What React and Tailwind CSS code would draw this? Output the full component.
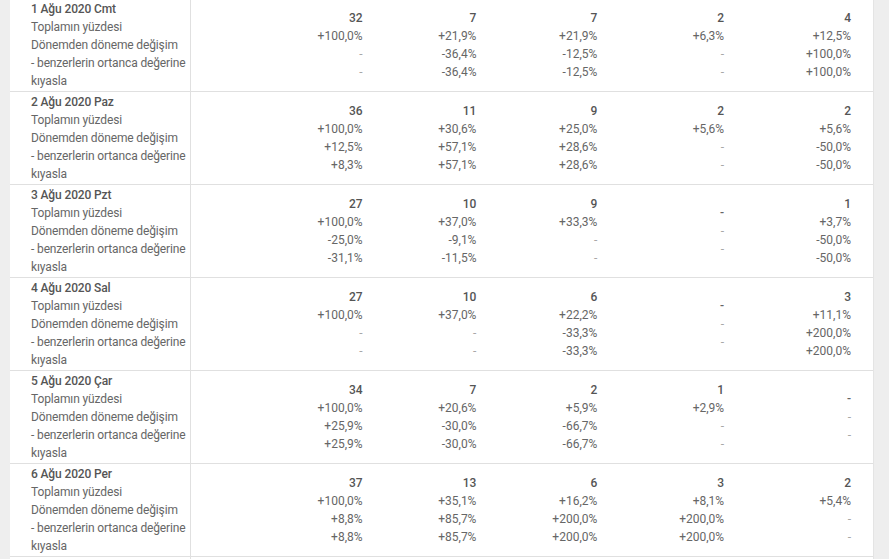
import React from 'react';

const rows = [
  {
    date: '1 Ağu 2020 Cmt',
    cols: [
      ['32', '+100,0%', '-', '-'],
      ['7', '+21,9%', '-36,4%', '-36,4%'],
      ['7', '+21,9%', '-12,5%', '-12,5%'],
      ['2', '+6,3%', '-', '-'],
      ['4', '+12,5%', '+100,0%', '+100,0%'],
    ],
  },
  {
    date: '2 Ağu 2020 Paz',
    cols: [
      ['36', '+100,0%', '+12,5%', '+8,3%'],
      ['11', '+30,6%', '+57,1%', '+57,1%'],
      ['9', '+25,0%', '+28,6%', '+28,6%'],
      ['2', '+5,6%', '-', '-'],
      ['2', '+5,6%', '-50,0%', '-50,0%'],
    ],
  },
  {
    date: '3 Ağu 2020 Pzt',
    cols: [
      ['27', '+100,0%', '-25,0%', '-31,1%'],
      ['10', '+37,0%', '-9,1%', '-11,5%'],
      ['9', '+33,3%', '-', '-'],
      null,
      ['1', '+3,7%', '-50,0%', '-50,0%'],
    ],
  },
  {
    date: '4 Ağu 2020 Sal',
    cols: [
      ['27', '+100,0%', '-', '-'],
      ['10', '+37,0%', '-', '-'],
      ['6', '+22,2%', '-33,3%', '-33,3%'],
      null,
      ['3', '+11,1%', '+200,0%', '+200,0%'],
    ],
  },
  {
    date: '5 Ağu 2020 Çar',
    cols: [
      ['34', '+100,0%', '+25,9%', '+25,9%'],
      ['7', '+20,6%', '-30,0%', '-30,0%'],
      ['2', '+5,9%', '-66,7%', '-66,7%'],
      ['1', '+2,9%', '-', '-'],
      null,
    ],
  },
  {
    date: '6 Ağu 2020 Per',
    cols: [
      ['37', '+100,0%', '+8,8%', '+8,8%'],
      ['13', '+35,1%', '+85,7%', '+85,7%'],
      ['6', '+16,2%', '+200,0%', '+200,0%'],
      ['3', '+8,1%', '+200,0%', '+200,0%'],
      ['2', '+5,4%', '-', '-'],
    ],
  },
];

const widths = ['w-[194px]', 'w-[114px]', 'w-[121px]', 'w-[127px]', 'w-[127px]'];

const ValueCell = ({ values, width }) => (
  <div className={`${width} flex flex-col justify-center items-end pr-[22px]`}>
    {values ? (
      values.map((v, i) =>
        i === 0 ? (
          <div key={i} className="font-medium text-[#555555]">{v}</div>
        ) : (
          <div key={i} className={v === '-' ? 'text-[#a8a8a8]' : 'text-[#666666]'}>{v}</div>
        )
      )
    ) : (
      <>
        <div className="font-medium text-[#666666]">-</div>
        <div className="text-[#a8a8a8]">-</div>
        <div className="text-[#a8a8a8]">-</div>
      </>
    )}
  </div>
);

export default function App() {
  return (
    <div
      className="w-[889px] h-[559px] overflow-hidden bg-[#eeeeee] flex text-[12px] leading-[18px]"
      style={{ fontFamily: 'Roboto, "Noto Sans", sans-serif' }}
    >
      <div className="ml-[10px] w-[864px] bg-white border-r border-[#e4e4e4] -mt-px">
        {rows.map((row) => (
          <div key={row.date} className="flex border-b border-[#e0e0e0]">
            <div className="w-[181px] border-r border-[#e0e0e0] pl-[21px] py-px text-[#666666] tracking-[-0.13px]">
              <div className="font-medium text-[#555555]">{row.date}</div>
              <div>Toplamın yüzdesi</div>
              <div>Dönemden döneme değişim</div>
              <div>- benzerlerin ortanca değerine</div>
              <div>kıyasla</div>
            </div>
            {row.cols.map((c, i) => (
              <ValueCell key={i} values={c} width={widths[i]} />
            ))}
          </div>
        ))}
        <div className="flex h-[20px]">
          <div className="w-[181px] border-r border-[#e0e0e0]" />
        </div>
      </div>
    </div>
  );
}
